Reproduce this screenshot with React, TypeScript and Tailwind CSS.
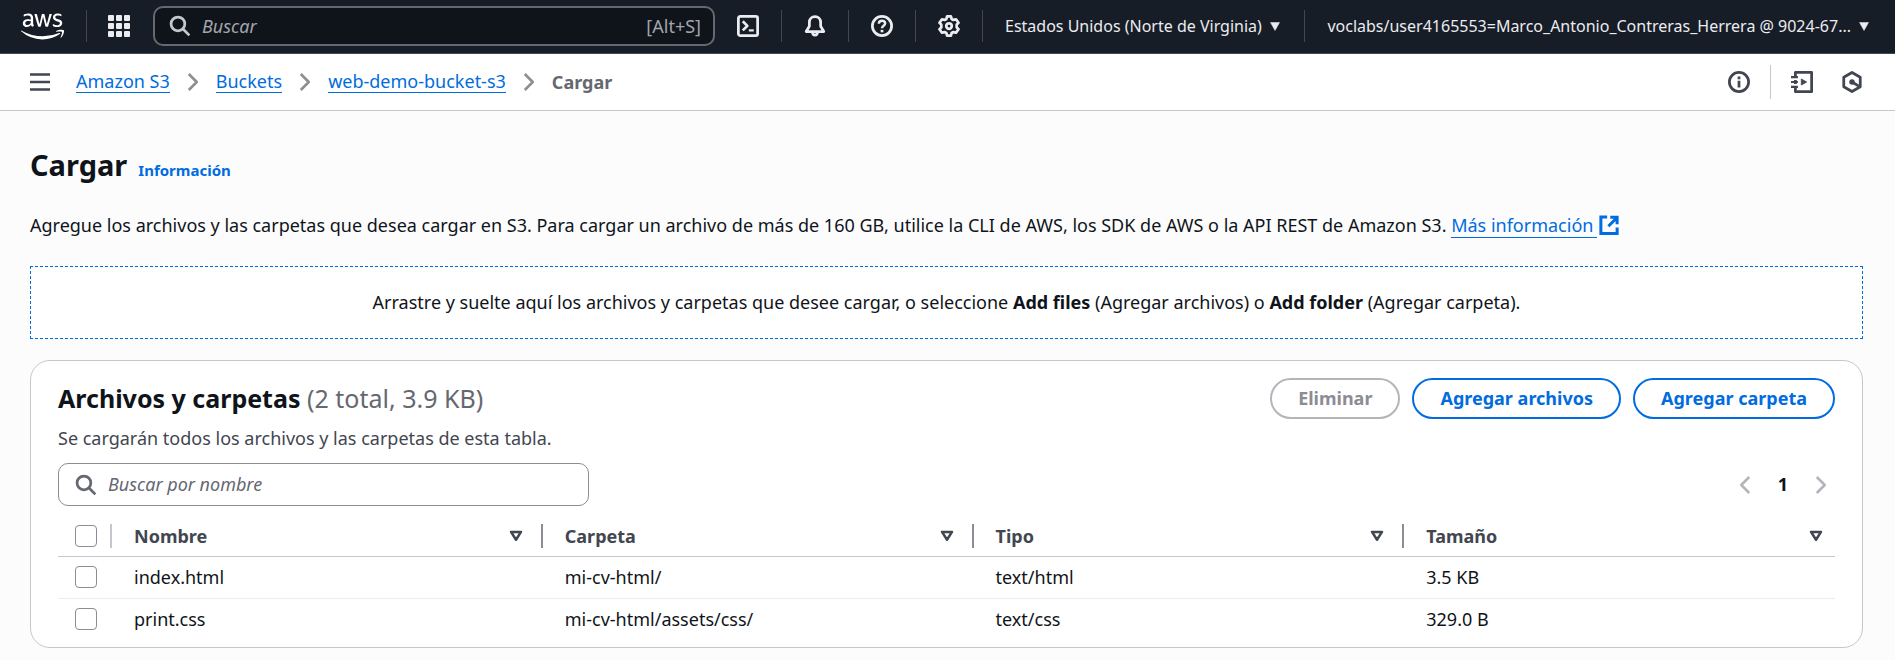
import type { ReactNode } from "react";
import { FaAws } from "react-icons/fa";

type Row = { name: string; folder: string; type: string; size: string };

const rows: Row[] = [
  { name: "index.html", folder: "mi-cv-html/", type: "text/html", size: "3.5 KB" },
  { name: "print.css", folder: "mi-cv-html/assets/css/", type: "text/css", size: "329.0 B" },
];

const columns = ["Nombre", "Carpeta", "Tipo", "Tamaño"];

function Icon({ children, className = "size-5" }: { children: ReactNode; className?: string }) {
  return (
    <svg
      viewBox="0 0 16 16"
      fill="none"
      stroke="currentColor"
      strokeWidth="2"
      strokeLinejoin="round"
      aria-hidden="true"
      className={`shrink-0 ${className}`}
    >
      {children}
    </svg>
  );
}

function SearchIcon({ className }: { className?: string }) {
  return (
    <Icon className={className}>
      <circle cx="6.5" cy="6.5" r="5" />
      <path d="m10.2 10.2 4.6 4.6" />
    </Icon>
  );
}

function CaretDown() {
  return (
    <svg viewBox="0 0 10 9" aria-hidden="true" className="h-[9px] w-2.5 shrink-0 fill-current">
      <path d="M.5.5h9L5 8.5z" stroke="currentColor" strokeWidth=".5" strokeLinejoin="round" />
    </svg>
  );
}

function Divider() {
  return <span className="h-8 w-px shrink-0 bg-[#424650]" />;
}

function Chevron() {
  return (
    <Icon className="size-5 text-[#8c8c94]">
      <path d="m4.6 1.6 6.4 6.4-6.4 6.4" />
    </Icon>
  );
}

function IconButton({ label, children }: { label: string; children: ReactNode }) {
  return (
    <button type="button" aria-label={label} className="flex w-[66px] shrink-0 items-center justify-center self-stretch">
      {children}
    </button>
  );
}

function TopBar() {
  return (
    <header className="flex h-[54px] items-center border-b border-[#424650] bg-[#161d26] pb-px text-[#ebebf0]">
      <a href="#inicio" aria-label="AWS" className="mr-[22px] ml-[21px] flex shrink-0 text-white">
        <FaAws className="h-[35px] w-[43px]" />
      </a>
      <Divider />
      <button type="button" aria-label="Servicios" className="flex w-[66px] shrink-0 items-center justify-center pr-0.5">
        <svg viewBox="0 0 22 22" aria-hidden="true" className="size-[22px] fill-current">
          {[0, 8, 16].map((y) =>
            [0, 8, 16].map((x) => <rect key={`${x}-${y}`} x={x} y={y} width="6" height="6" rx="1" />),
          )}
        </svg>
      </button>
      <label className="flex h-10 w-[562px] shrink-0 items-center rounded-[10px] border-2 border-[#656871] bg-[#0f141a] pr-3 pl-[14px] text-[#c6c6cd]">
        <SearchIcon className="size-[22px]" />
        <input
          aria-label="Buscar"
          placeholder="Buscar"
          className="ml-[11px] min-w-0 flex-1 bg-transparent text-[18px] outline-none placeholder:text-[#a4a4ad] placeholder:italic"
        />
        <span className="text-[18px] text-[#a4a4ad]">[Alt+S]</span>
      </label>
      <IconButton label="CloudShell">
        <Icon className="size-[22px]">
          <rect x="1" y="1" width="14" height="14" rx="1.4" />
          <path d="m4.2 4.6 3.3 3.3-3.3 3.3" />
          <path d="M8.6 11.2h3.6" strokeWidth="1.6" />
        </Icon>
      </IconButton>
      <Divider />
      <IconButton label="Notificaciones">
        <Icon className="size-[22px]">
          <path d="M12.1 8.2V5.4C12.1 3 10.3 1.2 8 1.2S3.9 3 3.9 5.4v2.8L1.6 12h12.8z" />
          <path d="M6.2 12.4c0 3 3.6 3 3.6 0" />
        </Icon>
      </IconButton>
      <Divider />
      <IconButton label="Ayuda">
        <Icon className="size-[22px]">
          <circle cx="8" cy="8" r="7" />
          <path d="M5.7 6.3C5.7 3.5 10.3 3.6 10.3 6c0 1.8-2.3 1.7-2.3 3.6" strokeWidth="1.8" />
          <path d="M8 10.8v1.8" />
        </Icon>
      </IconButton>
      <Divider />
      <IconButton label="Configuración">
        <Icon className="size-[22px]">
          <path d="M6.6 1h2.8l.5 1.9 1.3.7 1.9-.5 1.8 2.5L13.6 7v2l1.3 1.4-1.8 2.5-1.9-.5-1.3.7L9.4 15H6.6l-.5-1.9-1.3-.7-1.9.5-1.8-2.5L2.4 9V7L1.1 5.6l1.8-2.5 1.9.5 1.3-.7z" />
          <circle cx="8" cy="8" r="2" />
        </Icon>
      </IconButton>
      <Divider />
      <button type="button" className="ml-[22px] flex shrink-0 items-center gap-2 text-[16px] whitespace-nowrap">
        Estados Unidos (Norte de Virginia)
        <CaretDown />
      </button>
      <span className="min-w-4 flex-1" />
      <Divider />
      <button type="button" className="mr-[26px] ml-[22px] flex min-w-0 items-center gap-2 text-[16px]">
        <span className="truncate">voclabs/user4165553=Marco_Antonio_Contreras_Herrera @ 9024-67...</span>
        <CaretDown />
      </button>
    </header>
  );
}

function BreadcrumbBar() {
  const link = "border-b border-[#006ce0] leading-[22px] text-[#006ce0]";
  return (
    <div className="flex h-[57px] items-center border-b border-[#c6c6cd] bg-white pr-8 pb-px pl-[30px] text-[#424650]">
      <button type="button" aria-label="Menú" className="flex">
        <Icon className="size-5">
          <path d="M0 2h16M0 8h16M0 14h16" />
        </Icon>
      </button>
      <nav aria-label="Ruta" className="ml-[26px] flex items-center gap-[13px] text-[18px]">
        <a href="#s3" className={link}>Amazon S3</a>
        <Chevron />
        <a href="#buckets" className={link}>Buckets</a>
        <Chevron />
        <a href="#bucket" className={link}>web-demo-bucket-s3</a>
        <Chevron />
        <span className="leading-[22px] font-bold text-[#656871]">Cargar</span>
      </nav>
      <div className="ml-auto flex items-center">
        <button type="button" aria-label="Información">
          <Icon className="size-[22px]">
            <circle cx="8" cy="8" r="7" />
            <path d="M8 7v5M8 4v2" />
          </Icon>
        </button>
        <span className="mx-5 h-[34px] w-px bg-[#c6c6cd]" />
        <button type="button" aria-label="Tutoriales">
          <Icon className="size-[22px]">
            <path d="M3.2 4.5V1H15v14H3.2v-3.500M3.200 6.500v3" />
            <path d="M0 4.500h5M0 8h5M0 11.500h5" strokeWidth="1.600" />
            <path d="M7.500 5.800v4.400L11.400 8z" fill="currentColor" strokeWidth=".6" />
          </Icon>
        </button>
        <button type="button" aria-label="Amazon Q" className="ml-7">
          <Icon className="size-[22px]">
            <path d="M8 1.100 14 4.500v7L8 14.900 2 11.500v-7z" />
            <circle cx="8" cy="8" r="2" fill="currentColor" stroke="none" />
            <path d="m8 8 5 3" />
          </Icon>
        </button>
      </div>
    </div>
  );
}

function Checkbox({ label }: { label: string }) {
  return (
    <input
      type="checkbox"
      aria-label={label}
      className="block size-[22px] appearance-none rounded-[4px] border border-[#8c8c94] bg-white checked:bg-[#006ce0]"
    />
  );
}

function FilesTable() {
  return (
    <table className="mt-[10px] w-full table-fixed border-collapse text-left text-[18px] leading-6">
      <thead className="text-[#424650]">
        <tr className="border-b border-[#c6c6cd]">
          <th className="h-10 w-[54px] p-0">
            <div className="flex items-center justify-between border-r-2 border-[#c6c6cd] pl-[17px]">
              <Checkbox label="Seleccionar todo" />
              <span className="h-6" />
            </div>
          </th>
          {columns.map((name, i) => (
            <th key={name} className="p-0">
              <div
                className={
                  i < columns.length - 1
                    ? "flex items-center justify-between border-r-2 border-[#8c8c94] pr-[15px] pl-[22px]"
                    : "flex items-center justify-between pr-[9px] pl-[22px]"
                }
              >
                <span className="font-bold">{name}</span>
                <button type="button" aria-label={`Ordenar por ${name}`}>
                  <Icon className="size-5">
                    <path d="M4 4.700h8L8 11z" />
                  </Icon>
                </button>
              </div>
            </th>
          ))}
        </tr>
      </thead>
      <tbody className="text-[#0f141a]">
        {rows.map((row) => (
          <tr key={row.name} className="border-b border-[#ebebf0] last:border-b-0">
            <td className="h-[42px] py-0 pr-0 pl-[17px]">
              <Checkbox label={`Seleccionar ${row.name}`} />
            </td>
            <td className="py-0 pl-[22px]">{row.name}</td>
            <td className="py-0 pl-[22px]">{row.folder}</td>
            <td className="py-0 pl-[22px]">{row.type}</td>
            <td className="py-0 pl-[22px]">{row.size}</td>
          </tr>
        ))}
      </tbody>
    </table>
  );
}

function FilesPanel() {
  const pill = "h-[41px] rounded-full border-2 px-[26px] text-[18px] font-bold";
  return (
    <section className="mt-[21px] rounded-[20px] border border-[#c6c6cd] bg-white px-[27px] pt-[17px] pb-[7px]">
      <div className="flex items-start justify-between">
        <div>
          <h2 className="text-[25px] leading-10 font-bold text-[#0f141a]">
            Archivos y carpetas <span className="font-normal text-[#656871]">(2 total, 3.9 KB)</span>
          </h2>
          <p className="mt-2 text-[18px] leading-6 text-[#424650]">
            Se cargarán todos los archivos y las carpetas de esta tabla.
          </p>
        </div>
        <div className="flex gap-3">
          <button type="button" disabled className={`${pill} border-[#b4b4bb] text-[#8c8c94]`}>Eliminar</button>
          <button type="button" className={`${pill} border-[#006ce0] text-[#006ce0]`}>Agregar archivos</button>
          <button type="button" className={`${pill} border-[#006ce0] text-[#006ce0]`}>Agregar carpeta</button>
        </div>
      </div>
      <div className="mt-[13px] flex items-center justify-between">
        <label className="flex h-[43px] w-[531px] items-center rounded-[10px] border border-[#8c8c94] bg-white px-4 text-[#656871]">
          <SearchIcon className="size-[22px]" />
          <input
            aria-label="Buscar por nombre"
            placeholder="Buscar por nombre"
            className="ml-[11px] min-w-0 flex-1 bg-transparent text-[18px] outline-none placeholder:text-[#656871] placeholder:italic"
          />
        </label>
        <div className="flex items-center gap-[23px] pr-1">
          <button type="button" aria-label="Página anterior" className="text-[#b4b4bb]">
            <Icon className="size-5">
              <path d="M11.400 1.600 5 8l6.400 6.400" />
            </Icon>
          </button>
          <button type="button" className="text-[18px] font-bold text-[#0f141a]">1</button>
          <button type="button" aria-label="Página siguiente" className="text-[#b4b4bb]">
            <Icon className="size-5">
              <path d="m4.600 1.600 6.400 6.400-6.400 6.400" />
            </Icon>
          </button>
        </div>
      </div>
      <FilesTable />
    </section>
  );
}

export default function App() {
  return (
    <div className="min-h-screen bg-[#fcfcfd] font-['Noto_Sans',sans-serif] text-[#0f141a]">
      <TopBar />
      <BreadcrumbBar />
      <main className="pt-[34px] pr-8 pb-3 pl-[30px]">
        <div className="flex items-baseline gap-[11px]">
          <h1 className="text-[29px] leading-10 font-bold">Cargar</h1>
          <a href="#info" className="text-[15px] font-bold text-[#006ce0]">Información</a>
        </div>
        <p className="mt-[28px] text-[18px] leading-6">
          Agregue los archivos y las carpetas que desea cargar en S3. Para cargar un archivo de más de 160 GB, utilice la CLI
          de AWS, los SDK de AWS o la API REST de Amazon S3.{" "}
          <a href="#mas" className="whitespace-nowrap text-[#006ce0]">
            <span className="border-b border-[#006ce0] pr-1">Más información</span>
            <Icon className="ml-[2px] inline-block size-5 align-[-3px] [stroke-linejoin:miter]">
              <path d="M9 1.800h5.500v5.500M7.500 9l7-7M14.500 10v4.700h-13V1.500H6.500" strokeWidth="2.400" />
            </Icon>
          </a>
        </p>
        <div className="mt-[29px] flex h-[73px] items-center justify-center border border-dashed border-[#006ce0] bg-white text-[18px]">
          <p>
            Arrastre y suelte aquí los archivos y carpetas que desee cargar, o seleccione <b>Add files</b> (Agregar archivos) o{" "}
            <b>Add folder</b> (Agregar carpeta).
          </p>
        </div>
        <FilesPanel />
      </main>
    </div>
  );
}
